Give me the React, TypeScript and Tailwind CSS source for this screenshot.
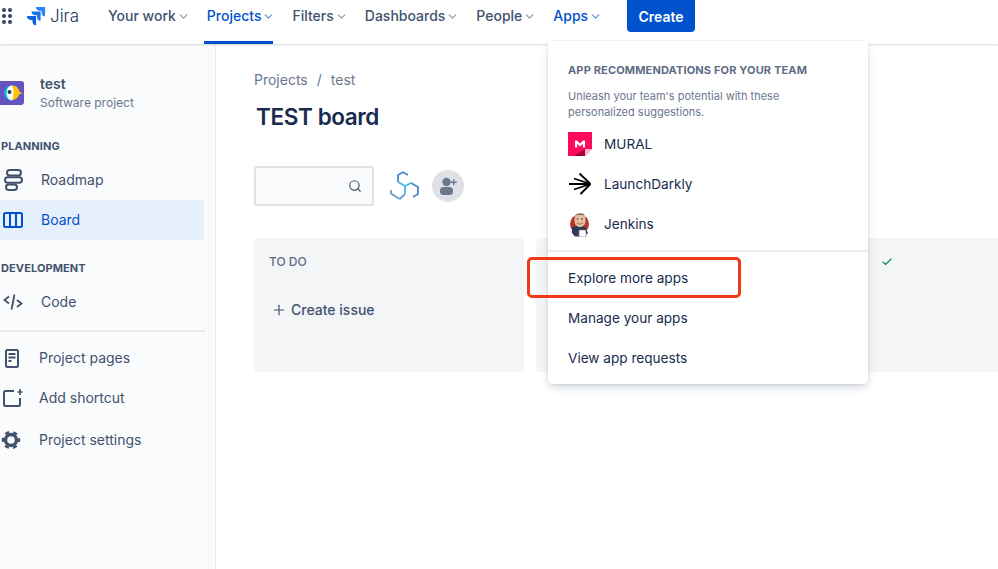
import { ChevronDown, Check, Plus, Search } from "lucide-react";
import type { ReactNode } from "react";

const navItems = ["Your work", "Projects", "Filters", "Dashboards", "People", "Apps"];

function NavItem({ label }: { label: string }) {
  const active = label === "Projects";
  const blue = active || label === "Apps";
  return (
    <div className={`relative flex h-[44px] items-start pt-[6px] pl-[2px] pr-[2px] ${blue ? "text-[#0052cc]" : "text-[#42526e]"}`}>
      <span className="text-[14px] leading-5 font-medium">{label}</span>
      <ChevronDown size={13} strokeWidth={2.5} className={`mt-[4px] ml-[1px] ${blue ? "text-[#6f95d8]" : "text-[#97a0af]"}`} />
      {active && <div className="absolute bottom-0 left-[-1px] right-[4px] h-[3px] bg-[#0052cc]" />}
    </div>
  );
}

function SideRow({ icon, label, pl, active }: { icon: ReactNode; label: string; pl: string; active?: boolean }) {
  return (
    <div className={`flex h-10 w-[204px] items-center rounded-r-[4px] ${active ? "bg-[#e6effc] text-[#0052cc]" : "text-[#42526e]"}`}>
      <div className="flex w-[28px] shrink-0 justify-center">{icon}</div>
      <span className={`${pl} text-[14px] leading-5`}>{label}</span>
    </div>
  );
}

function RoadmapIcon() {
  return (
    <svg width="24" height="24" viewBox="0 0 24 24" fill="none" stroke="#42526e" strokeWidth="2" className="ml-[-2px]">
      <rect x="6" y="2" width="14" height="5.500" rx="2.700" />
      <rect x="4" y="9.200" width="17" height="5.500" rx="2.700" />
      <rect x="5" y="16.500" width="11" height="5.500" rx="2.700" />
    </svg>
  );
}

function BoardIcon() {
  return (
    <svg width="22" height="18" viewBox="0 0 22 18" fill="none" stroke="#0052cc" strokeWidth="2" className="ml-[-2px]">
      <rect x="2" y="2" width="18" height="14" rx="1.500" />
      <path d="M8 2v14M14 2v14" />
    </svg>
  );
}

function CodeIcon() {
  return (
    <svg width="20" height="18" viewBox="0 0 20 18" fill="none" stroke="#42526e" strokeWidth="1.800" className="ml-[-3px]">
      <path d="M6 3.500 1.500 7 6 10.500M14 7l4.500 3.500L14 14M11.500 1.500 8.500 16.500" />
    </svg>
  );
}

function PagesIcon() {
  return (
    <svg width="16" height="21" viewBox="0 0 16 21" fill="none" className="ml-[-5px]">
      <rect x="2" y="2" width="12" height="17" rx="1.500" stroke="#42526e" strokeWidth="2" />
      <path d="M4.500 6h7M4.500 9.500h7M4.500 13h3" stroke="#42526e" strokeWidth="1.800" />
    </svg>
  );
}

function ShortcutIcon() {
  return (
    <svg width="22" height="20" viewBox="0 0 22 20" fill="none" stroke="#42526e" strokeWidth="2" className="ml-[-3px]">
      <path d="M12 3H3.500A1.500 1.500 0 0 0 2 4.500v12A1.500 1.500 0 0 0 3.500 18h13a1.500 1.500 0 0 0 1.500-1.500V10" />
      <path d="M18 1v6M15.500 4h5" strokeWidth="1.600" />
    </svg>
  );
}

function SettingsIcon() {
  return (
    <svg width="20" height="20" viewBox="0 0 20 20" className="ml-[-6px]" fill="none" stroke="#42526e">
      <circle cx="10" cy="10" r="5.500" strokeWidth="3.400" />
      <circle cx="10" cy="10" r="8" strokeWidth="2.400" strokeDasharray="4.200 4.178" strokeDashoffset="2.100" />
    </svg>
  );
}

function ParrotLogo() {
  return (
    <svg width="24" height="24" viewBox="0 0 24 24" className="rounded-r-[3px]">
      <rect width="24" height="24" fill="#6554c0" />
      <path d="M12 4.500c4.500 0 7 3 7 5.500l3 2.500-3 1c-.8 3-3.500 5.500-7 5.500z" fill="#ffc400" />
      <path d="M12 4.500c-4 0-8 3-8 7.500s4 7.500 8 7.500c-2-2-2-3-2-7.500s0-5.500 2-7.500z" fill="#00b8d9" />
      <path d="M12 4.500c-3 0-5.500 3.500-5.500 7.500s2.500 7.500 5.500 7.500c2-3 2-12 0-15z" fill="#fff" />
      <circle cx="9.500" cy="11" r="2" fill="#253858" />
    </svg>
  );
}

function JiraLogo() {
  return (
    <svg width="20" height="21" viewBox="0 0 21 22">
      <path d="M20 1h-9.500a4 4 0 0 0 4 4h1.800v1.700a4 4 0 0 0 3.700 4z" fill="#2684ff" />
      <path d="M15.300 5.800H5.800a4 4 0 0 0 4 4h1.800v1.700a4 4 0 0 0 3.700 4z" fill="#1a73ee" />
      <path d="M10.600 10.600H1a4 4 0 0 0 4 4h1.800v1.700a4 4 0 0 0 3.800 4z" fill="#0f62dd" />
    </svg>
  );
}

function TeamLogo() {
  return (
    <svg width="30" height="30" viewBox="0 0 30 30" fill="none" strokeWidth="1.800">
      <path d="M18 4 13 1.200 8 4v7" stroke="#4f86c4" />
      <path d="M15 23l-5 5-4-2.200L1 22.500V19" stroke="#6f9bcb" />
      <path d="M21 12l7 4v7l-5 3" stroke="#4f86c4" />
      <path d="M8 11l7 4 6-3M15 15v8" stroke="#45b7ec" strokeWidth="1.800" />
    </svg>
  );
}

function AddPersonAvatar() {
  return (
    <div className="ml-[12px] flex h-8 w-8 items-center justify-center rounded-full bg-[#dfe1e6]">
      <svg width="20" height="20" viewBox="0 0 20 20" fill="#6b778c">
        <circle cx="8.500" cy="6" r="4.200" />
        <rect x="2" y="11" width="13" height="8" rx="3.500" />
        <path d="M15 3.200h1.400v2.300h2.300v1.400h-2.300v2.300H15V6.900h-2.300V5.500H15z" />
      </svg>
    </div>
  );
}

function MuralLogo() {
  return (
    <svg width="24" height="24" viewBox="0 0 24 24">
      <path d="M0 0h24v17l-7 7H0z" fill="#ff0a5a" />
      <path d="M6 24 17 17v7z" fill="#a3003c" />
      <path d="M17 24v-7h7z" fill="#ffb3cd" />
      <path d="M7 15.500V8.500h2L12 11.500l3-3h2v7h-2.200v-3.800L12 14.500l-2.800-2.800v3.800z" fill="#fff" />
    </svg>
  );
}

function LaunchDarklyLogo() {
  return (
    <svg width="24" height="24" viewBox="0 0 24 24" fill="none" stroke="#000" strokeWidth="1.800">
      <path d="M1 12h21.500M22.500 12 11.500 1.500M22.500 12 6 6.500M22.500 12 6 17.500M22.500 12 12.500 22" />
    </svg>
  );
}

function JenkinsLogo() {
  return (
    <svg width="24" height="26" viewBox="0 0 24 26">
      <circle cx="11.500" cy="13" r="9.500" fill="#b8352e" />
      <path d="M6.500 9c0-5 3-7 5.500-7s5.500 2 5.500 7-2.500 7.500-5.500 7.500S6.500 14 6.500 9z" fill="#e8bfa0" />
      <path d="M7 4.500C8 2 16 1.500 17 4.500c-3-1-7-1-10 0z" fill="#7c5a48" />
      <path d="M4 16c3 0 4-1 4.500-1.500 2 2 5 2 7 0l3 4 1.500 3.500-4 3.500H7l-3-3.500z" fill="#2f3a55" />
      <rect x="11" y="19" width="7" height="7" rx="1" fill="#fff" stroke="#777" strokeWidth="0.600" />
      <circle cx="9.500" cy="8" r="0.800" fill="#333" />
      <circle cx="14" cy="8" r="0.800" fill="#333" />
      <path d="M8.500 11.500c2 1.500 5 1.500 7 0-1 2.500-6 2.500-7 0z" fill="#8a6248" />
    </svg>
  );
}

function AppRow({ icon, label }: { icon: ReactNode; label: string }) {
  return (
    <div className="flex h-10 items-center pl-5">
      <div className="flex w-6 justify-center">{icon}</div>
      <span className="ml-3 text-[13.600px] leading-5 text-[#172b4d]">{label}</span>
    </div>
  );
}

function LinkRow({ label }: { label: string }) {
  return <div className="flex h-10 items-center pl-5 text-[13.600px] leading-5 text-[#172b4d]">{label}</div>;
}

export default function App() {
  return (
    <div className="relative flex h-[569px] w-[998px] flex-col overflow-hidden bg-white font-['Inter',sans-serif]">
      <header className="relative z-10 flex h-[44px] shrink-0 items-start bg-white shadow-[0_1px_2px_rgba(9,30,66,0.18)]">
        <div className="mt-[8px] ml-[2px] grid h-[16px] w-[10px] shrink-0 grid-cols-2 gap-x-[2px] gap-y-[2px]">
          {[0, 1, 2, 3, 4, 5].map((i) => (
            <span key={i} className="h-[4px] w-[4px] rounded-full bg-[#344563]" />
          ))}
        </div>
        <div className="mt-[6px] ml-[14px] shrink-0">
          <JiraLogo />
        </div>
        <span className="mt-[2px] ml-[4px] w-[28px] text-[17px] leading-7 font-light text-[#253858]">Jira</span>
        <nav className="ml-[28px] flex h-[44px] gap-[13px]">
          {navItems.map((n) => (
            <NavItem key={n} label={n} />
          ))}
        </nav>
        <button className="ml-[23px] h-8 w-[68px] rounded-b-[4px] bg-[#0052cc] text-[14px] font-semibold text-white">
          Create
        </button>
      </header>

      <div className="flex flex-1">
        <aside className="w-[216px] shrink-0 border-r border-[#ebecf0] bg-[#fafbfc] pt-[27px]">
          <div className="flex h-[44px] items-center">
            <ParrotLogo />
            <div className="ml-4">
              <div className="text-[14px] leading-[18px] font-semibold text-[#42526e]">test</div>
              <div className="mt-[1px] text-[12px] leading-[18px] text-[#6b778c]">Software project</div>
            </div>
          </div>
          <div className="mt-[23px] mb-[6px] pl-[1px] text-[11px] leading-4 font-bold tracking-[0.1px] text-[#42526e]">PLANNING</div>
          <SideRow icon={<RoadmapIcon />} label="Roadmap" pl="pl-[13px]" />
          <SideRow icon={<BoardIcon />} label="Board" pl="pl-[13px]" active />
          <div className="mt-5 mb-[6px] pl-[1px] text-[11px] leading-4 font-bold tracking-[0.1px] text-[#42526e]">DEVELOPMENT</div>
          <SideRow icon={<CodeIcon />} label="Code" pl="pl-[13px]" />
          <div className="mt-2 mb-[6px] h-[2px] w-[206px] bg-[#ebecf0]" />
          <SideRow icon={<PagesIcon />} label="Project pages" pl="pl-[11px]" />
          <SideRow icon={<ShortcutIcon />} label="Add shortcut" pl="pl-[11px]" />
          <div className="mt-[2px]">
            <SideRow icon={<SettingsIcon />} label="Project settings" pl="pl-[11px]" />
          </div>
        </aside>

        <main className="min-w-0 flex-1 pt-[26px] pl-[38px]">
          <div className="flex text-[14px] leading-5 text-[#6b778c]">
            <span>Projects</span>
            <span className="mx-[9px]">/</span>
            <span>test</span>
          </div>
          <h1 className="mt-[11px] ml-[2px] text-[22.500px] leading-8 font-semibold tracking-[-0.4px] text-[#172b4d]">TEST board</h1>
          <div className="mt-[33px] flex items-center">
            <div className="flex h-10 w-[120px] items-center justify-end rounded-[3px] border-2 border-[#dfe1e6] bg-[#fafbfc] pr-[10px]">
              <Search size={14} strokeWidth={2} className="text-[#42526e]" />
            </div>
            <div className="ml-[16px]">
              <TeamLogo />
            </div>
            <AddPersonAvatar />
          </div>
          <div className="mt-[32px] flex gap-3">
            <div className="h-[134px] w-[270px] shrink-0 rounded-[4px] bg-[#f4f5f7] px-[15px] pt-[16px]">
              <div className="text-[12px] leading-4 font-medium text-[#5e6c84]">TO DO</div>
              <div className="mt-[30px] flex items-center text-[#42526e]">
                <Plus size={16} strokeWidth={1.800} className="ml-[2px]" />
                <span className="ml-[4px] text-[14px] leading-5 font-medium">Create issue</span>
              </div>
            </div>
            <div className="h-[134px] w-[270px] shrink-0 rounded-[4px] bg-[#f4f5f7]" />
            <div className="h-[134px] w-[270px] shrink-0 rounded-[4px] bg-[#f4f5f7] pt-[18px] pl-[63px]">
              <Check size={12} strokeWidth={2.200} className="text-[#00875a]" />
            </div>
          </div>
        </main>
      </div>

      <div className="absolute top-[41px] left-[548px] z-20 w-[320px] rounded-b-[4px] bg-white shadow-[0_4px_8px_-2px_rgba(9,30,66,0.25),0_0_1px_rgba(9,30,66,0.31)]">
        <div className="px-5 pt-[21px] pb-[4px]">
          <div className="text-[11px] leading-4 font-bold tracking-[0.15px] text-[#5e6c84]">APP RECOMMENDATIONS FOR YOUR TEAM</div>
          <div className="mt-[10px] text-[11px] leading-4 text-[#6b778c]">
            Unleash your team's potential with these
            <br />
            personalized suggestions.
          </div>
        </div>
        <AppRow icon={<MuralLogo />} label="MURAL" />
        <AppRow icon={<LaunchDarklyLogo />} label="LaunchDarkly" />
        <AppRow icon={<JenkinsLogo />} label="Jenkins" />
        <div className="mt-[6px] h-[2px] bg-[#ebecf0]" />
        <div className="h-[6px]" />
        <LinkRow label="Explore more apps" />
        <LinkRow label="Manage your apps" />
        <LinkRow label="View app requests" />
        <div className="h-[6px]" />
      </div>

      <div className="absolute top-[257px] left-[527px] z-30 h-[41px] w-[214px] rounded-[5px] border-[3px] border-[#f03a17]" />
    </div>
  );
}
